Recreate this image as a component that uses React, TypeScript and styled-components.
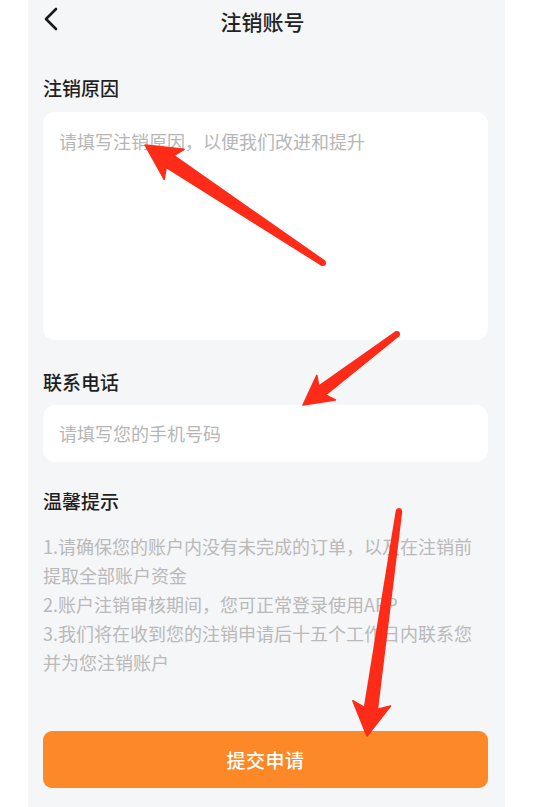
import React from "react";
import styled, { createGlobalStyle } from "styled-components";

const GlobalStyle = createGlobalStyle`
  html, body {
    margin: 0;
    padding: 0;
    background: #ffffff;
  }
  * {
    box-sizing: border-box;
  }
  body {
    font-family: "Noto Sans CJK SC", "Noto Sans", sans-serif;
  }
`;

const tips = [
  "1.请确保您的账户内没有未完成的订单，以及在注销前提取全部账户资金",
  "2.账户注销审核期间，您可正常登录使用APP",
  "3.我们将在收到您的注销申请后十五个工作日内联系您并为您注销账户",
];

type Pt = [number, number];

// tapering arrow drawn as a polygon from tail to tip
function arrowPoints(
  tail: Pt,
  tip: Pt,
  headLen: number,
  headW: number,
  tailW: number,
  neckW: number
) {
  const dx = tip[0] - tail[0];
  const dy = tip[1] - tail[1];
  const len = Math.hypot(dx, dy);
  const ux = dx / len;
  const uy = dy / len;
  const nx = -uy;
  const ny = ux;
  const bx = tip[0] - ux * headLen;
  const by = tip[1] - uy * headLen;
  const wx = bx - ux * 5;
  const wy = by - uy * 5;
  const pts: Pt[] = [
    [tail[0] + (nx * tailW) / 2, tail[1] + (ny * tailW) / 2],
    [bx + (nx * neckW) / 2, by + (ny * neckW) / 2],
    [wx + (nx * headW) / 2, wy + (ny * headW) / 2],
    tip,
    [wx - (nx * headW) / 2, wy - (ny * headW) / 2],
    [bx - (nx * neckW) / 2, by - (ny * neckW) / 2],
    [tail[0] - (nx * tailW) / 2, tail[1] - (ny * tailW) / 2],
  ];
  return pts.map((p) => `${p[0].toFixed(1)},${p[1].toFixed(1)}`).join(" ");
}

const arrows = [
  { tail: [323, 263] as Pt, tip: [145, 145] as Pt, headLen: 30, headW: 36, tailW: 5, neckW: 14 },
  { tail: [397, 334] as Pt, tip: [303, 405] as Pt, headLen: 24, headW: 31, tailW: 5, neckW: 11 },
  { tail: [399, 511] as Pt, tip: [367, 736] as Pt, headLen: 28, headW: 38, tailW: 5, neckW: 13 },
];

function App() {
  return (
    <Page>
      <GlobalStyle />
      <Phone>
        <Header>
          <BackButton aria-label="返回">
            <svg width="16" height="24" viewBox="0 0 16 24">
              <polyline
                points="13,2 3,12 13,22"
                fill="none"
                stroke="#1a1a1a"
                strokeWidth="2.6"
                strokeLinecap="round"
                strokeLinejoin="round"
              />
            </svg>
          </BackButton>
          <Title>注销账号</Title>
        </Header>

        <Content>
          <Label $top={33}>注销原因</Label>
          <ReasonBox placeholder="请填写注销原因，以便我们改进和提升" />

          <Label $top={29}>联系电话</Label>
          <PhoneInput placeholder="请填写您的手机号码" />

          <Label $top={26}>温馨提示</Label>
          <Tips>
            {tips.map((t, i) => (
              <Tip key={i}>{t}</Tip>
            ))}
          </Tips>

          <SubmitButton>提交申请</SubmitButton>
        </Content>
      </Phone>

      <Overlay width="541" height="807" viewBox="0 0 541 807">
        {arrows.map((a, i) => (
          <g key={i} fill="#fd2b18">
            <polygon points={arrowPoints(a.tail, a.tip, a.headLen, a.headW, a.tailW, a.neckW)} strokeLinejoin="round" stroke="#fd2b18" strokeWidth="1.5" />
            <circle cx={a.tail[0]} cy={a.tail[1]} r={a.tailW / 2 + 0.5} />
          </g>
        ))}
      </Overlay>
    </Page>
  );
}
export default App;

const Page = styled.div`
  position: relative;
  width: 541px;
  height: 807px;
  overflow: hidden;
  background: #ffffff;
`;

const Phone = styled.div`
  margin-left: 28px;
  width: 477px;
  height: 807px;
  background: #f5f6f8;
  display: flex;
  flex-direction: column;
`;

const Header = styled.header`
  position: relative;
  height: 42px;
  display: flex;
  align-items: center;
  justify-content: center;
`;

const BackButton = styled.button`
  position: absolute;
  left: 15px;
  top: 7px;
  padding: 0;
  border: none;
  background: none;
  display: flex;
`;

const Title = styled.h1`
  margin: 0 8px 0 0;
  font-size: 21px;
  font-weight: 500;
  color: #222222;
  line-height: 30px;
`;

const Content = styled.main`
  display: flex;
  flex-direction: column;
  padding: 0 17px 0 15px;
`;

const Label = styled.h2<{ $top: number }>`
  margin: ${({ $top }) => $top}px 0 0;
  font-size: 19px;
  font-weight: 500;
  line-height: 26px;
  color: #1f1f1f;
`;

const fieldBase = `
  width: 100%;
  border: none;
  outline: none;
  background: #ffffff;
  border-radius: 12px;
  font-family: "Noto Sans CJK SC", "Noto Sans", sans-serif;
  font-size: 18px;
  color: #333333;
  &::placeholder {
    color: #b6b6b6;
  }
`;

const ReasonBox = styled.textarea`
  ${fieldBase}
  margin-top: 11px;
  height: 228px;
  resize: none;
  padding: 16px 16px;
  line-height: 26px;
`;

const PhoneInput = styled.input`
  ${fieldBase}
  margin-top: 10px;
  height: 57px;
  padding: 0 16px;
  line-height: 57px;
`;

const Tips = styled.div`
  margin-top: 18px;
  max-width: 432px;
`;

const Tip = styled.p`
  margin: 0;
  font-size: 18px;
  line-height: 29px;
  color: #b9b9b9;
`;

const SubmitButton = styled.button`
  margin-top: 54px;
  height: 57px;
  width: 100%;
  border: none;
  border-radius: 9px;
  background: #fd8828;
  color: #ffffff;
  font-family: "Noto Sans CJK SC", "Noto Sans", sans-serif;
  font-size: 19px;
  font-weight: 500;
  letter-spacing: 0.5px;
`;

const Overlay = styled.svg`
  position: absolute;
  left: 0;
  top: 0;
  pointer-events: none;
`;
